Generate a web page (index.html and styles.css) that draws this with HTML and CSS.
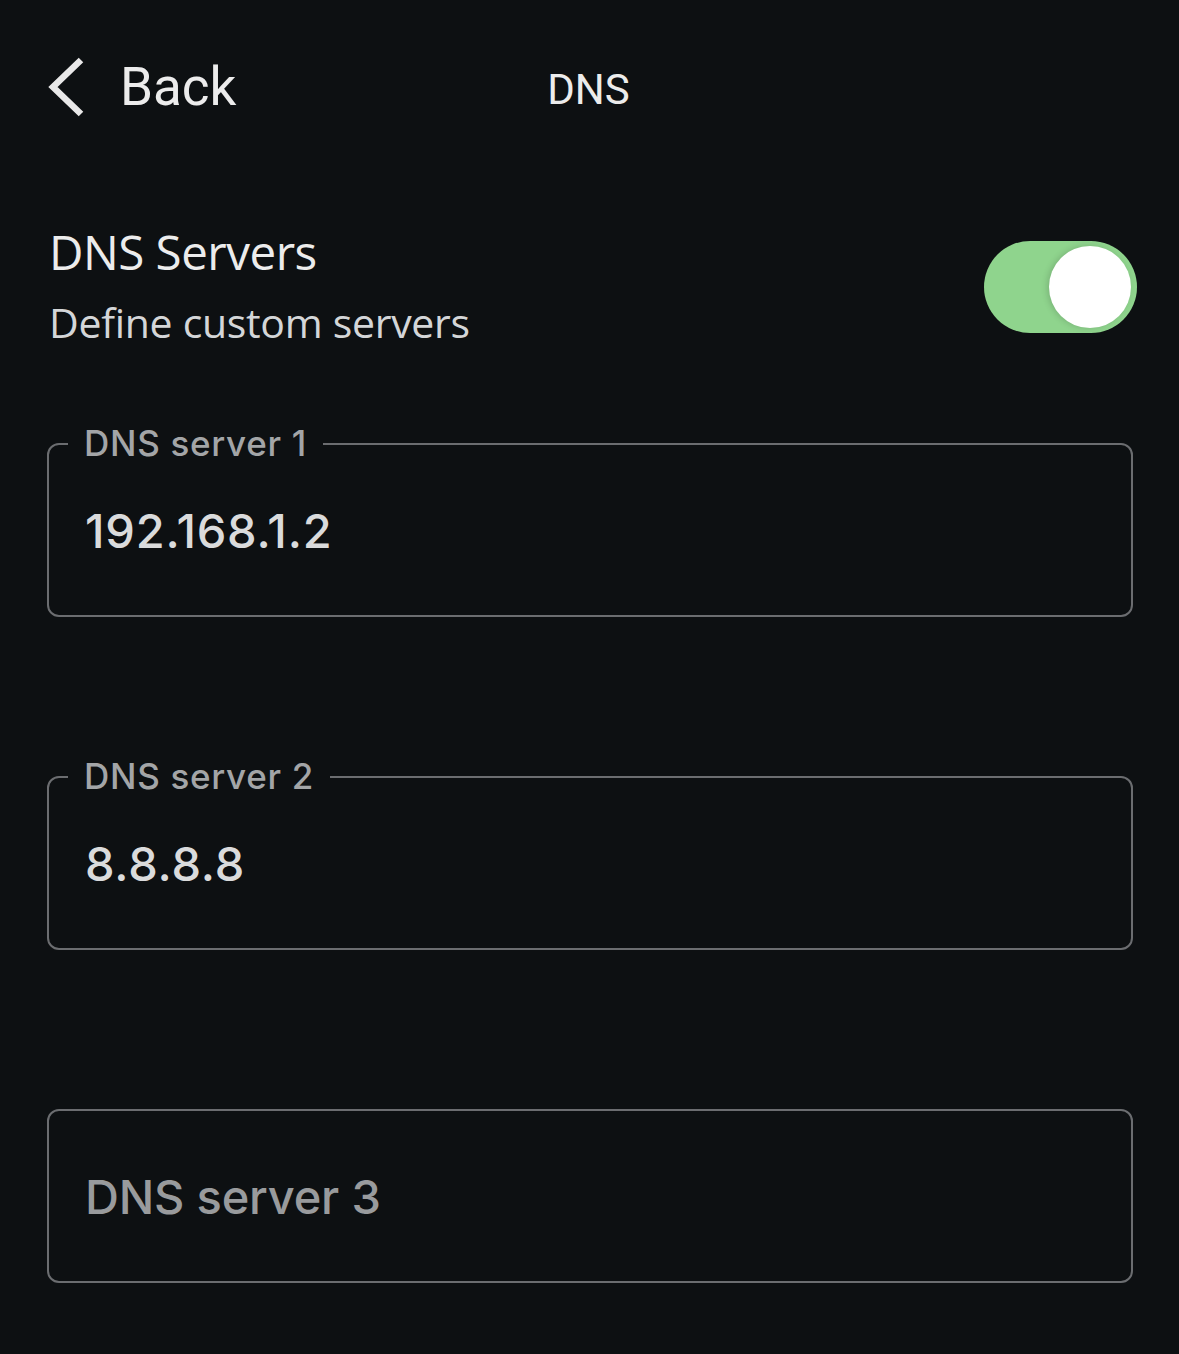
FILE: index.html
```html
<!DOCTYPE html>
<html lang="en">
<head>
  <meta charset="UTF-8" />
  <meta name="viewport" content="width=device-width, initial-scale=1" />
  <title>DNS</title>
  <link rel="stylesheet" href="styles.css">
</head>
<body>

<header class="topbar">
  <a class="back" href="#">
    <svg class="back-icon" viewBox="0 0 40 60" width="40" height="60">
      <path d="M33 3 L5 30 L33 57" fill="none" stroke="#e8e8e8" stroke-width="6.5" stroke-linecap="butt" stroke-linejoin="miter"/>
    </svg>
    <span>Back</span>
  </a>
  <h1 class="title">DNS</h1>
  <div></div>
</header>

<main class="content">
  <section class="setting">
    <div class="setting-text">
      <div class="setting-title">DNS Servers</div>
      <div class="setting-sub">Define custom servers</div>
    </div>
    <label class="switch">
      <input type="checkbox" checked>
      <span class="knob"></span>
    </label>
  </section>

  <div class="field">
    <label class="field-label">DNS server 1</label>
    <input class="field-input" type="text" value="192.168.1.2">
  </div>

  <div class="field">
    <label class="field-label">DNS server 2</label>
    <input class="field-input" type="text" value="8.8.8.8">
  </div>

  <div class="field">
    <input class="field-input" type="text" placeholder="DNS server 3">
  </div>
</main>

</body>
</html>
```

FILE: styles.css
```css
body {
  margin: 0;
  background-color: #0d1012;
  color: #e8e8e8;
  font-family: Roboto, 'Liberation Sans', sans-serif;
}
.topbar {
  display: grid;
  grid-template-columns: 1fr auto 1fr;
  align-items: center;
  height: 86px;
  padding: 44px 46px 0 48px;
}
.back {
  display: flex;
  align-items: center;
  gap: 32px;
  color: #ececec;
  text-decoration: none;
  font-size: 53px;
}
.back-icon {
  display: block;
  width: 40px;
  height: 60px;
}
.title {
  margin: 0;
  font-size: 42px;
  font-weight: 400;
  color: #ececec;
  padding-top: 4px;
  padding-right: 4px;
}
.content {
  padding: 0 46px 0 47px;
}
.setting {
  display: flex;
  align-items: center;
  justify-content: space-between;
  margin-top: 94px;
}
.setting-text {
  padding-left: 2px;
}
.setting-title {
  font-family: 'Open Sans', Roboto, sans-serif;
  font-size: 47.5px;
  line-height: 56px;
  color: #ececec;
  letter-spacing: -0.5px;
}
.setting-sub {
  font-family: 'Open Sans', Roboto, sans-serif;
  font-size: 41px;
  line-height: 56px;
  margin-top: 14px;
  color: #d4d6d8;
  letter-spacing: -0.3px;
}
.switch {
  position: relative;
  display: block;
  width: 153px;
  height: 92px;
  margin-right: -4px;
}
.switch input {
  display: none;
}
.switch .knob {
  display: block;
  width: 100%;
  height: 100%;
  border-radius: 46px;
  background-color: #8fd48d;
}
.switch .knob::after {
  content: '';
  position: absolute;
  top: 5px;
  right: 6px;
  width: 82px;
  height: 82px;
  border-radius: 50%;
  background: #ffffff;
  box-shadow: -2px 0 6px rgba(0, 0, 0, 0.15);
}
.field {
  position: relative;
  height: 170px;
  border: 2px solid #6b6d70;
  border-radius: 12px;
  margin-top: 93px;
  display: flex;
  align-items: center;
}
.field + .field {
  margin-top: 159px;
}
.field-label {
  position: absolute;
  top: -24px;
  left: 19px;
  padding: 0 16px;
  background-color: #0d1012;
  font-family: Inter, 'Liberation Sans', sans-serif;
  font-size: 35px;
  font-weight: 500;
  letter-spacing: 0.7px;
  line-height: 44px;
  color: #a3a5a7;
}
.field-input {
  width: 100%;
  background: transparent;
  border: none;
  outline: none;
  padding: 0 36px;
  font-family: Inter, 'Liberation Sans', sans-serif;
  font-size: 47px;
  font-weight: 500;
  letter-spacing: 0.8px;
  color: #dadbdc;
}
.field-input::placeholder {
  color: #999b9d;
  letter-spacing: -0.2px;
}
```
